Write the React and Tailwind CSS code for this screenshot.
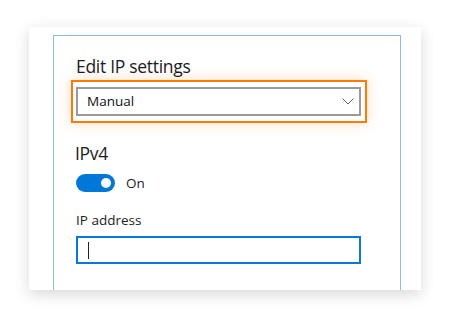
import React from "react";

export default function App() {
  return (
    <div
      className="w-[450px] h-[318px] bg-white overflow-hidden pt-[27px] pl-[29px]"
      style={{ fontFamily: '"Open Sans", "Noto Sans", sans-serif' }}
    >
      <div className="w-[392px] h-[263px] bg-white shadow-[0_4px_14px_rgba(0,0,0,0.16)] flex flex-col pt-[8px] pl-[24px]">
        <div className="w-[348px] flex-1 border border-b-0 border-[#8fbdd6] pl-[22px] pt-[18px] text-[#1b1b1b]">
          <h2 className="text-[17.5px] leading-[24px] tracking-[-0.3px]">Edit IP settings</h2>

          <div className="mt-[2px] ml-[-5px] w-[296px] h-[43px] border-2 border-[#ff7a00] shadow-[0_0_12px_rgba(255,140,40,0.3)] pl-[3px] pt-[5px]">
            <div className="w-[285px] h-[29px] border-2 border-[#9a9a9a] bg-white flex items-center justify-between pl-[9px] pr-[5px]">
              <span className="text-[13.5px] text-[#111]">Manual</span>
              <svg width="12" height="7" viewBox="0 0 12 7" fill="none">
                <path d="M0.5 0.5 L6 6 L11.5 0.5" stroke="#666" strokeWidth="1" />
              </svg>
            </div>
          </div>

          <h3 className="mt-[19px] text-[17.5px] leading-[22px] tracking-[-0.3px] ml-[-1px]">IPv4</h3>

          <div className="mt-[9px] h-[20px] flex items-center gap-[11px]">
            <div className="w-[39px] h-[18px] rounded-full bg-[#0078d7] flex items-center justify-end pr-[4px]">
              <div className="w-[10px] h-[10px] rounded-full bg-white" />
            </div>
            <span className="text-[13.5px] leading-[20px] text-[#222]">On</span>
          </div>

          <div className="mt-[17px] text-[13.5px] leading-[20px] text-[#222]">IP address</div>

          <div className="mt-[6px] w-[285px] h-[28px] border-2 border-[#0a78d6] flex items-center pl-[10px]">
            <div className="w-px h-[17px] bg-[#222]" />
          </div>
        </div>
      </div>
    </div>
  );
}
